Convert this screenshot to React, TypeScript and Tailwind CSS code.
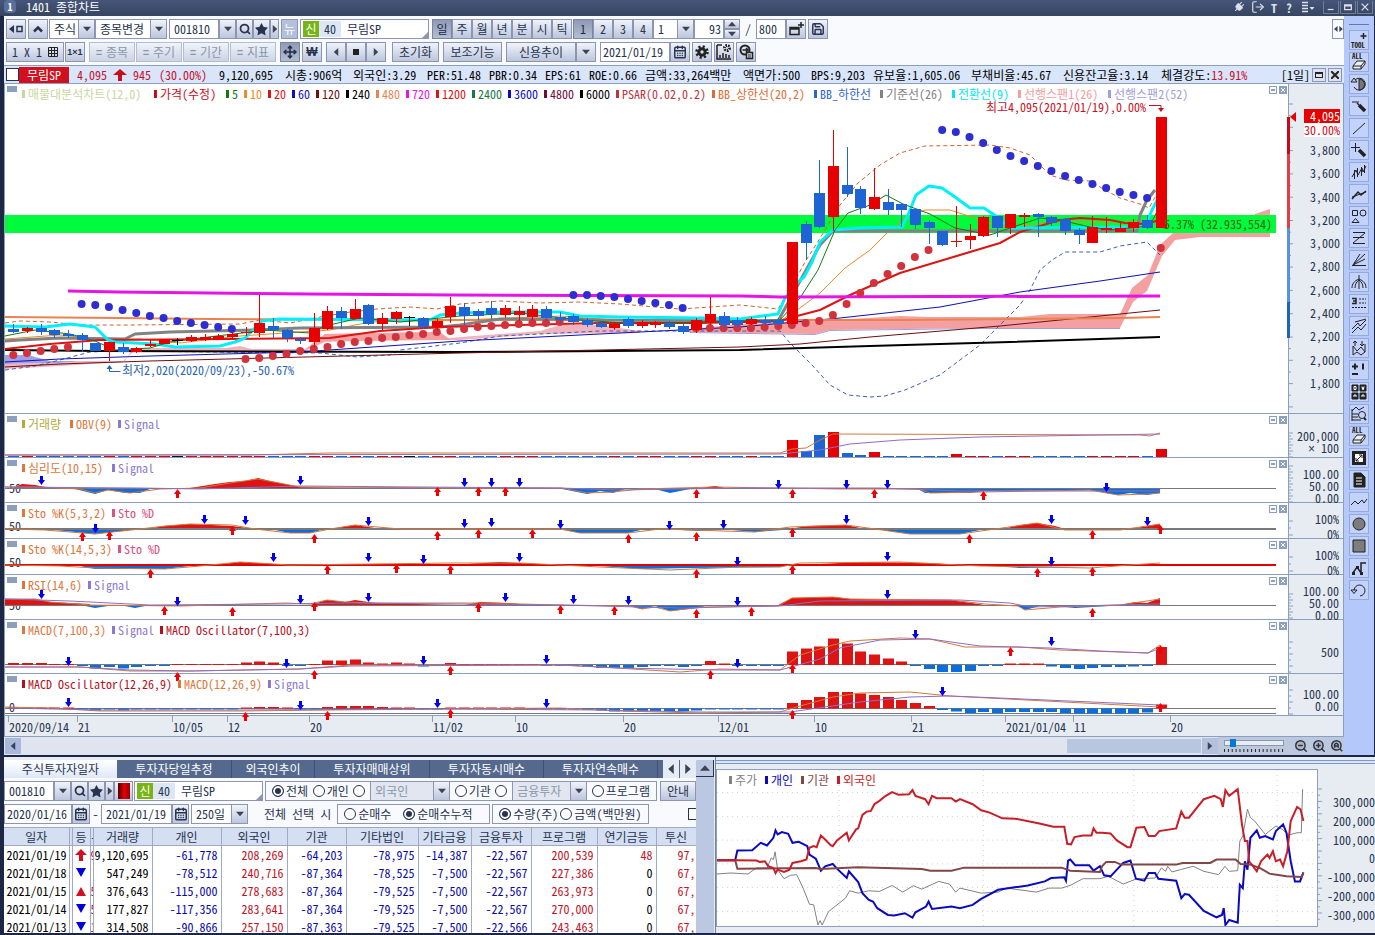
import { ReactNode } from "react"
import { CalendarDays, LogOut, Move, Plug, Save, Search, Star, ZoomIn, ZoomOut } from "lucide-react"

type LegendItem = [string, string]

const START = 13.3
const STEP = 13.66
const cx = (i: number) => START + STEP * i

// labels sit on a 6px grid: a hangul syllable takes two cells, everything else one
const cells = (text: string) => [...text].reduce((n, c) => n + (c >= "가" ? 12 : 6), 0)

const UP = "#e60000"
const DOWN = "#1e64d2"
const FLAT = "#111111"

// high, body top, body bottom, low, colour
const candles: [number, number, number, number, string][] = [
  [324, 329, 332, 333, DOWN], [327, 328, 331, 333, UP], [324, 328, 332, 335, DOWN], [329, 330, 335, 338, DOWN],
  [330, 334, 336, 338, DOWN], [333, 335, 340, 352, DOWN], [343, 343, 351, 351, DOWN], [342, 342, 351, 361, UP],
  [343, 347, 352, 354, DOWN], [347, 348, 352, 353, UP], [339, 344, 346, 347, UP], [339, 339, 344, 344, UP],
  [338, 340, 341, 345, FLAT], [335, 337, 341, 342, UP], [334, 337, 340, 341, UP], [334, 336, 340, 340, UP],
  [332, 334, 337, 339, UP], [327, 332, 333, 336, UP], [295, 323, 333, 337, UP], [318, 326, 330, 338, DOWN],
  [329, 330, 338, 342, DOWN], [337, 339, 341, 344, DOWN], [313, 328, 342, 347, UP], [306, 311, 329, 330, UP],
  [307, 311, 318, 329, DOWN], [299, 309, 319, 319, UP], [304, 305, 324, 325, DOWN], [313, 318, 324, 330, UP],
  [311, 312, 319, 324, UP], [316, 317, 318, 326, FLAT], [317, 318, 327, 329, DOWN], [319, 321, 327, 330, UP],
  [297, 306, 317, 323, UP], [303, 307, 316, 325, DOWN], [309, 311, 316, 320, DOWN], [301, 308, 314, 319, DOWN],
  [305, 308, 315, 318, UP], [306, 311, 315, 321, UP], [305, 309, 317, 320, UP], [306, 309, 318, 321, DOWN],
  [312, 317, 320, 324, DOWN], [314, 316, 322, 325, DOWN], [318, 320, 325, 327, DOWN], [321, 323, 327, 328, DOWN],
  [322, 324, 328, 330, UP], [317, 319, 326, 328, DOWN], [320, 322, 326, 328, UP], [321, 322, 325, 328, UP],
  [321, 323, 327, 329, DOWN], [324, 326, 332, 334, DOWN], [318, 320, 330, 333, UP], [297, 314, 322, 325, UP],
  [312, 316, 325, 329, DOWN], [317, 320, 325, 328, DOWN], [317, 319, 324, 325, UP], [316, 320, 323, 326, DOWN],
  [318, 320, 324, 326, DOWN], [242, 242, 324, 324, UP], [221, 224, 243, 260, DOWN], [160, 193, 227, 228, DOWN],
  [130, 166, 217, 231, UP], [147, 185, 194, 197, DOWN], [186, 189, 208, 214, DOWN], [168, 197, 209, 210, UP],
  [189, 202, 210, 215, DOWN], [203, 204, 210, 227, DOWN], [208, 209, 225, 229, DOWN], [220, 222, 228, 244, DOWN],
  [231, 231, 245, 246, DOWN], [206, 241, 242, 247, UP], [224, 236, 240, 249, UP], [216, 217, 236, 237, UP],
  [216, 216, 228, 237, DOWN], [214, 214, 228, 234, UP], [213, 215, 217, 227, UP], [213, 214, 217, 237, DOWN],
  [216, 217, 223, 226, DOWN], [218, 219, 231, 235, DOWN], [228, 230, 235, 244, DOWN], [216, 227, 243, 243, UP],
  [217, 228, 230, 233, UP], [223, 228, 232, 232, UP], [219, 222, 228, 232, UP], [215, 220, 228, 229, DOWN],
  [117, 117, 228, 228, UP],
]

// first index, colour, y of each dot
const sar: [number, string, number[]][] = [
  [0, "#d2323c", [355, 353, 351, 349, 347]],
  [5, "#2d2dd2", [304, 305, 307, 310, 313, 316, 318, 321, 323, 325, 327, 329]],
  [17, "#d2323c", [359, 358, 356, 354, 351, 349, 347, 344, 342, 341, 338, 337, 335, 334, 332, 331, 329, 327, 326, 325, 324, 323, 323, 322]],
  [41, "#2d2dd2", [295, 295, 296, 297, 299, 301, 303, 305, 308]],
  [50, "#d2323c", [328, 328, 328, 328, 328, 327, 326, 325, 323, 321, 315, 304, 293, 283, 274, 266, 257, 250]],
  [68, "#2d2dd2", [130, 132, 137, 143, 150, 156, 161, 166, 171, 176, 180, 184, 188, 192, 195, 198]],
  [84, "#d2323c", [248]],
]

const bigVolume: Record<number, number> = { 57: 17, 58: 6, 59: 22, 60: 25, 61: 4, 62: 2, 63: 5, 69: 3, 84: 8 }

const macd = [
  2, 2, 2, 1, 0.5, -1, -3.5, -2, -3.5, -2, -1, -0.5, 1, 1, 1, 1, 1, 2.5, 3.5, 2.5, -1, -1, 1, 4.5, 4.5, 5.5, 2.5, 1.5,
  2.5, 1.5, -1.5, -1, 2, 1, 1, 1, 1, 1, 1, -0.5, -0.5, -1, -1.5, -3, -3, -3, -2, -1, -1, -2, -1, 4, 1.5, -1, -0.5, -0.5,
  -0.5, 13.5, 16.5, 18.5, 26.5, 21.5, 13.5, 10.5, 6.5, 3.5, -1, -4, -7, -7, -6, -1, -1, 1.5, 1.5, 1.5, -1.5, -3, -4, -3,
  -2, -2, -1.5, -1, 18,
]

const osc = [
  0.5, 0.5, 0.5, 0.5, 0.5, -1, -2, -1, -2, -1, -1, -1, -1, -1, -1, -1, -1, 0.5, 1.5, 1.5, 0.5, -0.5, -0.5, 1.5, 2.5, 2.5,
  2.5, 1.5, 1, 1, -1, -1, 0.5, 0.5, 0.5, 0.5, 0.5, 0.5, -0.5, -0.5, -1, -1, -1.5, -2, -3, -3, -3, -2.5, -2.5, -2.5, -2, -0.5,
  -0.5, -1, -1, -1, -1, 5.5, 8.5, 11.5, 16.5, 16.5, 15, 13.5, 11.5, 8.5, 5.5, 2.5, -1.5, -3, -4.5, -3.5, -4.5, -3.5, -3.5,
  -3.5, -3.5, -4.5, -5, -5, -5, -5, -5, -4, 4,
]

const priceLegend: LegendItem[] = [
  ["매물대분석차트(12,0)", "#c8d7a0"], ["가격(수정)", "#c80f1e"], ["5", "#147814"], ["10", "#eb8c28"], ["20", "#dc1414"],
  ["60", "#0f0fb4"], ["120", "#6e0f0f"], ["240", "#000000"], ["480", "#eb8250"], ["720", "#e614e6"], ["1200", "#dc1414"],
  ["2400", "#197846"], ["3600", "#0a0ac8"], ["4800", "#6e0a3c"], ["6000", "#000000"], ["PSAR(0.02,0.2)", "#be323c"],
  ["BB_상한선(20,2)", "#dc6e32"], ["BB_하한선", "#3264c8"], ["기준선(26)", "#828282"], ["전환선(9)", "#00e6f0"],
  ["선행스팬1(26)", "#f0a0a0"], ["선행스팬2(52)", "#a0a0dc"],
]

const dates: [string, number][] = [
  ["2020/09/14", 69], ["21", 95], ["10/05", 55], ["12", 82], ["20", 123], ["11/02", 83], ["10", 108], ["20", 95],
  ["12/01", 96], ["10", 97], ["21", 94], ["2021/01/04", 68], ["11", 97], ["20", 173],
]

const columns: [string, string][] = [
  ["일자", "w-[65px]"], ["·", "w-[3px]"], ["등", "w-[18px]"], ["-", "w-[3px]"], ["거래량", "w-[59px]"], ["개인", "w-[69px]"],
  ["외국인", "w-[66px]"], ["기관", "w-[59px]"], ["기타법인", "w-[72px]"], ["기타금융", "w-[53px]"], ["금융투자", "w-[60px]"],
  ["프로그램", "w-[66px]"], ["연기금등", "w-[59px]"], ["투신", "w-[40px]"],
]

const rows = [
  ["2021/01/19", "", "limit", "9", "9,120,695", "-61,778", "208,269", "-64,203", "-78,975", "-14,387", "-22,567", "200,539", "48", "97,"],
  ["2021/01/18", "", "down", "", "547,249", "-78,512", "240,716", "-87,364", "-78,525", "-7,500", "-22,567", "227,386", "0", "67,"],
  ["2021/01/15", "", "up", "5", "376,643", "-115,000", "278,683", "-87,364", "-79,525", "-7,500", "-22,567", "263,973", "0", "67,"],
  ["2021/01/14", "", "down", "5", "177,827", "-117,356", "283,641", "-87,364", "-79,525", "-7,500", "-22,567", "270,000", "0", "67,"],
  ["2021/01/13", "", "down", "1", "314,508", "-90,866", "257,150", "-87,363", "-79,525", "-7,500", "-22,566", "243,463", "0", "67,"],
]

const btn =
  "flex h-5 shrink-0 items-center justify-center border border-[#8c96b4] bg-linear-to-b from-[#f0f3fa] to-[#bcc6dc] text-[#28344f]"
const btnOn =
  "flex h-5 shrink-0 items-center justify-center border border-[#7885a5] bg-linear-to-b from-[#8f9bb5] to-[#b4bed2] text-[#1e2a46]"
const btnDim =
  "flex h-5 shrink-0 items-center justify-center border border-[#b4bed2] bg-linear-to-b from-[#f0f3fa] to-[#ccd4e4] text-[#8c96aa]"
const field = "h-5 border border-[#8c96b4] bg-white pb-0.5 text-[#28344f] outline-none"

export default function App() {
  return (
    <div className="flex h-screen w-full flex-col overflow-hidden bg-[#1c2746] font-['Noto_Sans_Mono_CJK_KR','Noto_Sans_CJK_KR',sans-serif] text-xs leading-4 whitespace-nowrap text-[#28344f]">
      <TitleBar />
      <div className="flex shrink-0 border-r border-b-2 border-l-4 border-[#1c2746]">
        <div className="flex min-w-0 flex-1 flex-col">
          <Toolbar />
          <InfoBar />
          <Charts />
          <DateAxis />
          <ScrollRow />
        </div>
        <SideTools />
      </div>
      <div className="flex min-h-0 flex-1 border-b-2 border-l-4 border-[#1c2746] bg-[#e7ecf2]">
        <InvestorPanel />
        <InvestorChart />
      </div>
    </div>
  )
}

function TitleBar() {
  return (
    <header className="flex h-4 shrink-0 items-start bg-linear-to-b from-[#46557a] to-[#36455f] pr-0.5 pl-1 leading-[13px] text-white">
      <span className="mr-2.5 flex h-[13px] w-3 items-center justify-center rounded-sm bg-[#5a6e9b] text-[10px] font-bold">1</span>
      <h1>1401 종합차트</h1>
      <div className="ml-auto flex items-center gap-1.5 text-[#dce1eb]">
        <Plug className="size-3 rotate-45 fill-current" />
        <LogOut className="size-3.5" />
        <span className="font-bold">T</span>
        <span className="w-3 text-center font-bold">?</span>
        <svg className="h-3 w-3.5" viewBox="0 0 14 12" fill="none" stroke="currentColor">
          <path d="M1 1.5h6M1 4.5h6M1 7.5h6M1 10.5h6" strokeWidth="1.5" />
          <path d="M8.5 6h5L11 9z" fill="currentColor" stroke="none" />
        </svg>
        <div className="flex gap-px pl-0.5">
          {["M3 9h7", "M3 3.5h8v5.5H3zM3 4.5h8", "M3 2l8 8M11 2l-8 8"].map((d, i) => (
            <button key={d} aria-label={["최소화", "최대화", "닫기"][i]} className="flex h-[13px] w-4 items-center justify-center border border-t-0 border-[#6e7d9b]">
              <svg className="h-2.5 w-3" viewBox="0 0 14 12" fill="none" stroke="currentColor" strokeWidth="1.5">
                <path d={d} />
              </svg>
            </button>
          ))}
        </div>
      </div>
    </header>
  )
}

function Tri({ d = "M0 2h9L4.500 7z", className = "h-2 w-2.5" }: { d?: string; className?: string }) {
  return (
    <svg className={className} viewBox="0 0 9 9" fill="#3c4355">
      <path d={d} />
    </svg>
  )
}

const LEFT = "M7 0v9L2 4.500z"
const RIGHT = "M2 0v9l5-4.500z"

function Gear() {
  return (
    <svg className="size-4" viewBox="0 0 16 16" fill="none" stroke="#222">
      <circle cx="8" cy="8" r="5.500" strokeWidth="2.500" strokeDasharray="2.160 2.160" />
      <circle cx="8" cy="8" r="3.200" strokeWidth="3" />
    </svg>
  )
}

function Pick({ label, value, className, dim }: { label: string; value: string; className: string; dim?: boolean }) {
  return (
    <div className={`relative shrink-0 ${className}`}>
      <select
        aria-label={label}
        disabled={dim}
        className={`block h-5 w-full appearance-none border border-[#8c96b4] pl-1 outline-none ${dim ? "bg-[#e1e6f0] text-[#8c96aa] opacity-100" : "bg-white text-[#28344f]"}`}
      >
        <option>{value}</option>
      </select>
      <span className="pointer-events-none absolute inset-y-0 right-0 flex w-[17px] items-center justify-center border border-[#8c96b4] bg-linear-to-b from-[#f0f3fa] to-[#bcc6dc]">
        <Tri />
      </span>
    </div>
  )
}

function CodeField() {
  return (
    <>
      <input aria-label="종목코드" defaultValue="001810" className={`${field} w-[50px] pl-1`} />
      <button aria-label="목록" className={`${btn} w-[17px]`}><Tri /></button>
      <button aria-label="검색" className={`${btn} w-[17px]`}><Search className="size-3" strokeWidth={3.5} /></button>
      <button aria-label="관심" className={`${btn} w-[17px]`}><Star className="size-[15px] shrink-0 fill-[#28344f]" strokeWidth={0} /></button>
      <button aria-label="다음" className={`${btn} w-[9px]`}><Tri d={RIGHT} className="size-2 shrink-0" /></button>
    </>
  )
}

function StockName() {
  return (
    <div className="relative flex h-5 w-[129px] shrink-0 items-center border border-[#8c96b4] bg-white pl-0.5">
      <span className="flex h-4 w-4 items-center justify-center bg-[#78b414] text-white">신</span>
      <span className="flex h-4 w-[22px] items-center justify-center bg-[#dce6f5]">40</span>
      <span className="pl-1.5">무림SP</span>
      <span className="absolute right-0 bottom-0 border-[3px] border-transparent border-r-[#8c96b4] border-b-[#8c96b4]" />
    </div>
  )
}

function Toolbar() {
  return (
    <div className="flex justify-between bg-[#f8fafe]">
      <div className="flex flex-col gap-[3px] py-[3px] pl-0.5">
        <div className="flex items-center">
          <button aria-label="이전" className={`${btn} mr-0.5 w-5`}>
            <svg className="h-2.5 w-3.5" viewBox="0 0 14 10" fill="#28344f"><path d="M0 5l5-4v8z" /><path d="M8 2.500h5v5H8z" fill="none" stroke="#28344f" strokeWidth="1.500" /></svg>
          </button>
          <button aria-label="접기" className={`${btn} mr-px w-5`}>
            <svg className="size-3" viewBox="0 0 12 12" fill="none" stroke="#28344f" strokeWidth="2.500"><path d="M2 8.500L6 4.500l4 4" /></svg>
          </button>
          <Pick label="구분" value="주식" className="w-[46px]" />
          <Pick label="종목변경" value="종목변경" className="mr-0.5 w-[72px]" />
          <CodeField />
          <button className="mr-0.5 ml-0.5 flex h-5 w-[17px] items-center justify-center border border-[#8c96b4] bg-[#b4bfdc] text-white">뉴</button>
          <StockName />
          <div className="ml-[3px] flex">
            {["일", "주", "월", "년", "분", "시", "틱"].map((t, i) => (
              <button key={t} className={`${i === 0 ? btnOn : btn} w-5`}>{t}</button>
            ))}
          </div>
          <div className="ml-px flex">
            {["1", "2", "3", "4"].map((t, i) => (
              <button key={t} className={`${i === 0 ? btnOn : btn} w-5`}>{t}</button>
            ))}
          </div>
          <Pick label="분 단위" value="1" className="w-[41px]" />
          <input aria-label="표시 봉수" defaultValue="93" className={`${field} w-[30px] pr-0.5 text-right`} />
          <div className="flex flex-col">
            <button aria-label="증가" className={`${btn} h-2.5! w-4`}><Tri d="M0 7h9L4.500 2z" className="size-2" /></button>
            <button aria-label="감소" className={`${btn} h-2.5! w-4`}><Tri className="size-2" /></button>
          </div>
          <span className="w-4 text-center">/</span>
          <input aria-label="전체 봉수" defaultValue="800" className={`${field} w-[30px] pl-0.5`} />
          <button aria-label="새 창" className={`${btn} mr-0.5 w-5`}>
            <svg className="size-4" viewBox="0 0 16 16" fill="none" stroke="#222" strokeWidth="1.500"><path d="M2 6.500h9v7H2zM2 8h9M13 1v6M10 4h6" /></svg>
          </button>
          <button aria-label="저장" className={`${btn} w-5`}><Save className="size-3.5" strokeWidth={2.5} /></button>
        </div>
        <div className="flex items-center">
          <button className={`${btn} mr-px w-[58px] gap-1.5`}>
            <span>1 X 1</span>
            <svg className="size-2.5" viewBox="0 0 10 10" fill="none" stroke="#222"><path d="M.5.5h9v9h-9zM3.500 0v10M6.500 0v10M0 3.500h10M0 6.500h10" /></svg>
          </button>
          <button className={`${btn} mr-1 w-5 font-['Liberation_Sans',sans-serif] text-[9px] font-bold`}>1×1</button>
          <div className="flex gap-px">
            {["종목", "주기", "기간", "지표"].map((t) => (
              <button key={t} className={`${btnDim} w-[46px] gap-1`}><b>=</b>{t}</button>
            ))}
          </div>
          <button aria-label="이동" className={`${btnOn} mr-0.5 ml-1 w-5`}><Move className="size-3.5" strokeWidth={2.5} /></button>
          <button aria-label="원화" className={`${btn} mr-1 w-5 font-['Liberation_Sans','Noto_Sans_CJK_KR',sans-serif] font-bold`}>₩</button>
          <div className="mr-1.5 flex">
            <button aria-label="뒤로" className={`${btn} w-5`}><Tri d={LEFT} className="size-2" /></button>
            <button aria-label="정지" className={`${btn} w-5`}><span className="size-1.5 bg-[#222]" /></button>
            <button aria-label="앞으로" className={`${btn} w-5`}><Tri d={RIGHT} className="size-2" /></button>
          </div>
          <button className={`${btn} mr-1 w-[47px]`}>초기화</button>
          <button className={`${btn} mr-1 w-[59px]`}>보조기능</button>
          <button className={`${btn} w-[70px]`}>신용추이</button>
          <button aria-label="신용추이 목록" className={`${btn} mr-1 w-5`}><Tri /></button>
          <input aria-label="기준일" defaultValue="2021/01/19" className={`${field} w-[70px] pl-0.5`} />
          <button aria-label="달력" className={`${btn} mr-0.5 w-5`}><CalendarDays className="size-3.5" strokeWidth={2.5} /></button>
          <button aria-label="설정" className={`${btn} mr-0.5 w-5`}><Gear /></button>
          <button aria-label="차트 설정" className={`${btn} mr-0.5 w-5`}>
            <svg className="size-4" viewBox="0 0 16 16" fill="none" stroke="#222" strokeWidth="1.500"><path d="M1 1v14h14M4 14v-3M7 14V9M10 14v-4M13 14v-3M1 1h5" /><circle cx="11" cy="4" r="2.500" strokeDasharray="1.500 1" strokeWidth="3" /></svg>
          </button>
          <button aria-label="전환" className={`${btn} w-5`}>
            <svg className="size-4" viewBox="0 0 16 16" fill="none" stroke="#222" strokeWidth="1.500"><circle cx="7" cy="6" r="4.500" strokeWidth="2" /><path d="M4.500 6h5M8 4l2 2-2 2" /><path d="M8.500 8.500h6v6h-6z" fill="#dde3ee" /><path d="M10 11h3M10 13h3" strokeWidth="1" /></svg>
          </button>
        </div>
      </div>
      <button aria-label="펼치기" className="mt-[3px] flex h-5 w-3 items-center justify-center border border-[#8c96b4]">
        <Tri d="M4 1v7L0 4.500zM6 1v7l4-3.500z" className="h-2 w-2.5" />
      </button>
    </div>
  )
}

function InfoBar() {
  const facts = [
    "시총:906억", "외국인:3.29", "PER:51.48", "PBR:0.34", "EPS:61", "ROE:0.66", "금액:33,264백만", "액면가:500",
    "BPS:9,203", "유보율:1,605.06", "부채비율:45.67", "신용잔고율:3.14",
  ]
  return (
    <div className="flex h-[19px] items-center border-t border-b border-[#8ca0be] bg-[#d9e5fb] pl-0.5 text-black">
      <input type="checkbox" aria-label="선택" className="size-[13px] shrink-0 appearance-none border border-[#28344f] bg-white" />
      <span className="flex h-4 w-[50px] shrink-0 items-center justify-center bg-[#d20f1e] text-white">무림SP</span>
      <div className="flex items-center pl-2 text-[#c80f1e]">
        <span>4,095</span>
        <svg className="mx-1.5 h-3 w-3.5" viewBox="0 0 14 12" fill="#c80f1e"><path d="M7 0l7 6H9v6H5V6H0z" /></svg>
        <span>945</span>
        <span className="ml-2">(30.00%)</span>
      </div>
      <span className="ml-3">9,120,695</span>
      <div className="ml-3 flex gap-2">
        {facts.map((f) => (
          <span key={f} style={{ width: cells(f) }}>{f}</span>
        ))}
        <span>체결강도:<span className="text-[#c80f1e]">13.91%</span></span>
      </div>
      <span className="ml-auto">[1일]</span>
      <button aria-label="창 크기" className="ml-0.5 flex h-3.5 w-3.5 shrink-0 items-center justify-center border border-[#8c96b4] bg-[#dce2ee]"><span className="h-1.5 w-2 border border-t-2 border-[#222]" /></button>
      <button aria-label="차트 닫기" className="mr-0.5 ml-0.5 flex h-3.5 w-3.5 shrink-0 items-center justify-center border border-[#8c96b4] bg-[#dce2ee]">
        <svg className="size-2" viewBox="0 0 8 8" stroke="#222" strokeWidth="2"><path d="M0 0l8 8M8 0L0 8" /></svg>
      </button>
    </div>
  )
}

function Legend({ items, className = "" }: { items: LegendItem[]; className?: string }) {
  return (
    <div className={`absolute flex ${className}`}>
      {items.map(([text, color]) => (
        <span key={text} className="flex items-center" style={{ color, width: cells(text) + 12 }}>
          <span className="mr-[3px] ml-1.5 h-2 w-[3px] shrink-0 bg-current" />
          {text}
        </span>
      ))}
    </div>
  )
}

type PanelProps = { top: number; height: number; legend: LegendItem[]; base?: [string, string]; axis: ReactNode; children: ReactNode }

function Panel({ top, height, legend, base, axis, children }: PanelProps) {
  return (
    <section className="flex border-b border-[#8ca0be]">
      <div className="relative min-w-0 flex-1">
        {base && <span className={`absolute left-1 leading-3 ${base[1]}`}>{base[0]}</span>}
        <svg className="relative block w-full overflow-visible" style={{ height }} viewBox={`5 ${top} 1283 ${height}`} preserveAspectRatio="none">
          {children}
        </svg>
        <span className="absolute top-0.5 left-0.5 h-1.5 w-2.5 bg-[#8ca0be]" />
        <Legend items={legend} className="top-0.5 left-[11px]" />
        <div className="absolute top-0.5 right-px flex gap-0.5">
          <button aria-label="지표 확대" className="flex size-2 items-center justify-center border border-[#8ca0be] bg-white"><span className="h-0.5 w-1 bg-[#8ca0be]" /></button>
          <button aria-label="지표 닫기" className="flex size-2 items-center justify-center bg-[#8ca0be]">
            <svg className="size-1.5" viewBox="0 0 6 6" stroke="white"><path d="M1 1l4 4M5 1L1 5" /></svg>
          </button>
        </div>
      </div>
      <div className="w-14 shrink-0 border-x border-[#8ca0be] bg-[#e7ecf2]" style={{ height }}>
        <div className="relative z-10" style={{ height }}>{axis}</div>
      </div>
    </section>
  )
}

function Ticks({ height, from, step }: { height: number; from: number; step: number }) {
  const n = Math.max(0, Math.floor((height - from) / step) + 1)
  return (
    <svg className="absolute top-0 left-0 w-2" style={{ height }} viewBox={`0 0 8 ${height}`} stroke="#8ca0be">
      {Array.from({ length: n }, (_, i) => (
        <path key={i} d={`M0 ${from + i * step}h${i % 2 ? 2 : 4}`} />
      ))}
    </svg>
  )
}

function Labels({ items, className }: { items: string[]; className: string }) {
  return (
    <div className={`pr-1 text-right ${className}`}>
      {items.map((t) => (
        <div key={t}>{t}</div>
      ))}
    </div>
  )
}

function Bars({ data, base, up, down }: { data: number[]; base: number; up: string; down: string }) {
  return (
    <g>
      {data.map((v, i) => (
        <rect key={i} x={Math.round(cx(i)) - 5} width={11} y={v > 0 ? base - Math.max(v, 1) : base} height={Math.max(Math.abs(v), 1)} fill={v > 0 ? up : down} />
      ))}
    </g>
  )
}

function Arrows({ down, up }: { down: [number, number][]; up: [number, number][] }) {
  return (
    <g>
      {down.map(([x, y]) => (
        <path key={`d${x}`} fill="#0000f0" d={`M${x - 1} ${y - 4}h3v4h2l-3.500 5l-3.500-5h2z`} />
      ))}
      {up.map(([x, y]) => (
        <path key={`u${x}`} fill="#f00000" d={`M${x - 1} ${y + 4}h3v-4h2l-3.500-5l-3.500 5h2z`} />
      ))}
    </g>
  )
}

function Line({ points, color, width = 1, dash }: { points: string; color: string; width?: number; dash?: string }) {
  return <polyline points={points} fill="none" stroke={color} strokeWidth={width} strokeDasharray={dash} strokeLinejoin="round" />
}

function PriceChart() {
  return (
    <>
      <path fill="#a0a0e6" d="M5 355L28 355L50 361L85 361L60 363L5 364z" />
      <path fill="#f0b4be" d="M5 364L60 363L85 361L125 361L133 348L225 348L240 346L252 349L305 349L325 334L380 333L440 332L448 338L540 331L560 325L600 325L640 331L640 333L540 334L460 340L400 340L325 342L305 351L133 352L122 362L60 366L5 369z" />
      <path fill="#f5a0a0" d="M305 350L325 334L440 332L450 340L325 341zM680 330L740 324L800 322L900 316L930 317L1020 317L1050 314L1120 314L1132 288L1148 275L1160 245L1175 231L1240 228L1255 214L1270 209L1270 237L1200 237L1175 240L1162 256L1147 291L1133 302L1120 328L980 328L830 330L815 334L680 332z" />
      <path fill="#a0a0dc" d="M690 332L815 334L830 330L980 328L1120 328V329H980L830 331L815 335L690 333z" />
      <rect x={5} y={215} width={1271} height={18} fill="#00fa3c" />
      <Line color="#c86432" dash="4 3" points="5,323 20,321 50,322 80,325 130,325 240,324 260,320 290,323 320,317 350,312 377,309 410,307 437,309 460,304 500,301 540,303 580,302 620,304 680,309 740,305 778,309 790,290 805,262 822,235 840,205 858,183 880,165 900,153 925,146 990,145 1010,148 1030,155 1050,175 1065,180 1090,181 1105,190 1120,198 1140,204 1149,208 1158,192" />
      <Line color="#3c5fb4" dash="4 3" points="5,370 35,366 60,360 90,352 115,351 320,353 357,357 390,355 400,350 460,343 500,336 600,331 700,331 780,331 790,343 812,365 830,385 848,395 870,397 885,396 905,390 940,375 980,345 1000,325 1020,305 1030,290 1040,270 1052,260 1065,252 1100,252 1120,246 1147,242 1160,255" />
      <Line color="#000" width={2} points="5,350 100,351 460,352 740,350 870,346 1010,342 1160,337" />
      <Line color="#6e0f0f" points="5,367 60,364 150,361 460,353 740,347 800,344 870,337 1000,326 1130,313 1160,310" />
      <Line color="#0f0fb4" points="5,362 60,359 150,356 300,352 460,341 740,327 840,318 940,307 1020,292 1100,281 1160,272" />
      <Line color="#eb8250" width={2} points="5,317 120,318 210,319 460,320 740,320 900,320 1120,318 1160,317" />
      <Line color="#eb8c28" points="5,339 60,335 100,339 140,339 180,343 240,336 300,332 330,330 370,322 460,320 560,316 640,322 780,321 800,308 820,293 845,268 870,250 887,233 905,218 925,210 950,210 975,218 1000,227 1060,222 1160,222" />
      <Line color="#828282" width={3} points="5,341 20,340 60,338 125,339 135,334 170,332 255,330 300,328 440,327 460,325 500,319 560,319 600,320 700,321 778,321 800,281 820,245 833,231 1137,231 1140,215 1147,200 1155,190" />
      <Line color="#dc1414" width={2} points="5,349 50,344 100,340 230,339 330,338 380,331 440,327 520,325 600,323 700,323 780,321 797,316 820,310 850,295 900,273 960,255 1000,243 1020,232 1040,226 1060,220 1080,218 1110,220 1125,223 1145,224 1160,220" />
      <Line color="#00f0fa" width={3} points="5,326 45,327 70,324 95,327 108,340 115,342 155,344 175,347 220,346 235,342 245,338 258,325 262,321 280,319 430,320 440,315 460,313 500,312 560,312 580,316 620,317 700,318 740,319 778,314 785,298 797,283 804,277 812,262 820,242 833,230 860,228 902,227 908,215 916,195 929,186 942,188 955,197 970,208 984,208 996,216 1010,228 1145,227 1152,210 1160,195" />
      <Line color="#147814" points="5,336 35,330 70,334 95,341 115,350 150,348 170,342 200,338 250,332 265,330 310,333 325,326 360,318 400,322 460,316 520,313 580,320 640,324 700,322 780,320 800,298 818,270 835,230 848,213 870,205 886,195 903,204 930,214 955,228 990,235 1010,228 1040,218 1060,220 1090,227 1110,230 1150,226 1160,205" />
      <Line color="#e614e6" width={3} points="68,291 118,292 308,294 455,295 740,296 780,297 1160,296" />
      {sar.map(([start, color, ys]) =>
        ys.map((y, i) => <circle key={`${start}-${i}`} cx={cx(start + i)} cy={y} r={4} fill={color} />)
      )}
      {candles.map(([high, top, bottom, low, color], i) => (
        <g key={i} fill={color}>
          <rect x={Math.round(cx(i))} y={high} width={1} height={low - high} />
          <rect x={Math.round(cx(i)) - 5} y={top} width={11} height={Math.max(bottom - top, 1)} />
        </g>
      ))}
      <path d="M1149 105.500h12v4" stroke="#c80f1e" fill="none" />
      <path d="M1158 108h6l-3 4z" fill="#c80f1e" />
      <path d="M109.500 368v3.500h11" stroke="#2864b4" fill="none" />
      <path d="M106.500 369h6l-3-4z" fill="#2864b4" />
    </>
  )
}

function Charts() {
  const red = "#dc1414"
  const blue = "#0a6edc"
  const grey = "#787878"
  const orange = "#d2783c"
  const violet = "#8c6ec8"
  const scale = ["3,800", "3,600", "3,400", "3,200", "3,000", "2,800", "2,600", "2,400", "2,200", "2,000", "1,800"]
  return (
    <div className="border-l border-[#8ca0be] bg-white">
      <Panel
        top={84}
        height={329}
        legend={priceLegend}
        axis={
          <>
            <Ticks height={329} from={20} step={11.65} />
            <svg className="absolute top-0 -left-0.5 h-[329px] w-2.5" viewBox="0 84 10 329">
              <path d="M0 117h3v52H0z" fill="#c80a14" />
              <path d="M0 154h3v74H0z" fill="#e63c46" />
              <path d="M0 228h3v74H0z" fill="#5a91dc" />
              <path d="M0 302h3v36H0z" fill="#1e64be" />
              <path d="M3 117l6-5v10z" fill="#e60000" />
            </svg>
            <div className="flex flex-col items-end pt-[25px] pr-[3px]">
              <span className="flex h-3.5 items-center bg-[#e60000] pl-1.5 text-white">4,095</span>
              <span className="mb-[5px] flex h-3.5 items-center bg-white text-[#c80f1e]">30.00%</span>
              <div className="flex h-[249px] flex-col items-end justify-between">
                {scale.map((s) => (
                  <span key={s}>{s}</span>
                ))}
              </div>
            </div>
          </>
        }
      >
        <PriceChart />
      </Panel>
      <div className="relative">
        <span className="absolute -top-[315px] right-[198px] text-[#c80f1e]">최고4,095(2021/01/19),0.00%</span>
        <span className="absolute -top-[198px] right-[72px] text-[#3c6414]">5.37% (32.935,554)</span>
        <span className="absolute -top-[52px] left-[117px] text-[#2864b4]">최저2,020(2020/09/23),-50.67%</span>
      </div>
      <Panel
        top={414}
        height={43}
        legend={[["거래량", "#b4aa3c"], ["OBV(9)", "#dc783c"], ["Signal", "#8c78d2"]]}
        axis={
          <>
            <Ticks height={43} from={19} step={3} />
            <div className="pt-4 pr-1 text-right leading-3">
              <div>200,000</div>
              <div><span className="font-['Liberation_Sans',sans-serif]">×</span> 100</div>
            </div>
          </>
        }
      >
        <g>
          {candles.map((c, i) => {
            const h = bigVolume[i] ?? 1
            return <rect key={i} x={Math.round(cx(i)) - 5} width={11} y={457 - h} height={h} fill={c[4]} />
          })}
        </g>
        <Line color={orange} points="5,455 250,455 330,453 780,453 792,449 806,448 820,440 833,434 1140,435 1150,436 1160,433" />
        <Line color={violet} points="5,455 780,454 820,450 850,444 900,440 980,437 1160,434" />
      </Panel>
      <Panel
        top={458}
        height={44}
        base={["50", "bottom-2"]}
        legend={[["심리도(10,15)", "#dc783c"], ["Signal", "#8c78d2"]]}
        axis={<><Ticks height={44} from={8} step={3} /><Labels items={["100.00", "50.00", "0.00"]} className="pt-2.5 leading-3" /></>}
      >
        <path d="M5 488.500H1276" stroke={grey} />
        <path fill={red} d="M13 488L22 484L35 485L50 488zM190 488L215 484L230 482L245 481L258 478L270 481L290 485L300 487L360 488zM700 488L715 486L725 488z" />
        <path fill={blue} d="M75 489L95 494L108 490L125 493L140 493L150 489zM562 489L587 494L600 491L613 493L625 489zM655 489L670 493L690 489zM918 489L925 493L970 493L983 491L1090 490L1105 493L1118 495L1130 493L1147 495L1160 493V489z" />
        <Line color={orange} points="5,487 40,487 80,489 95,493 108,490 130,493 160,489 200,488 230,483 258,479 300,487 480,488 562,488 587,493 613,492 640,489 715,487 840,489 918,489 930,493 1090,490 1118,495 1147,494 1160,493" />
        <Line color={violet} points="5,487 140,488 200,489 300,486 420,487 560,488 620,490 740,488 880,488 960,491 1160,491" />
        <Arrows
          down={[[41, 480], [300, 480], [464, 482], [491, 482], [519, 482], [778, 484], [846, 484], [887, 484], [1106, 487]]}
          up={[[177, 494], [437, 492], [478, 492], [505, 492], [696, 494], [792, 494], [874, 494], [983, 496]]}
        />
      </Panel>
      <Panel
        top={503}
        height={35}
        base={["50", "bottom-1.5"]}
        legend={[["Sto %K(5,3,2)", "#dc783c"], ["Sto %D", "#dc5082"]]}
        axis={<><Ticks height={35} from={18} step={7} /><Labels items={["100%", "0%"]} className="pt-2 leading-[15px]" /></>}
      >
        <path fill={red} d="M145 529L165 526L190 524L232 526L255 529zM330 529L355 525L375 528zM790 529L806 526L846 525L865 529zM1002 529L1020 525L1037 523L1055 526L1065 529zM1130 529L1160 524V529z" />
        <path fill={blue} d="M45 529L95 534L140 529zM270 529L290 533L310 533L325 529zM560 529L580 533L628 533L645 529zM660 529L700 531L720 529zM720 529L755 532L782 530zM875 529L910 534L960 534L985 529z" />
        <path d="M5 529H1276" stroke={grey} strokeWidth={2} />
        <Line color={orange} points="5,529 45,530 95,534 140,529 165,526 190,524 232,525 255,529 290,533 310,533 330,529 355,525 400,529 540,529 560,529 580,533 628,533 660,529 755,532 790,527 846,525 875,529 910,534 960,534 1002,528 1037,523 1065,530 1120,530 1160,524" />
        <Arrows
          down={[[95, 528], [204, 519], [245, 520], [368, 521], [464, 523], [491, 522], [560, 524], [669, 525], [723, 524], [846, 519], [1051, 519], [1147, 521]]}
          up={[[82, 537], [109, 536], [232, 531], [314, 539], [437, 536], [478, 534], [532, 534], [628, 539], [696, 537], [792, 533], [969, 539], [1092, 535], [1160, 530]]}
        />
      </Panel>
      <Panel
        top={539}
        height={35}
        base={["50", "bottom-1.5"]}
        legend={[["Sto %K(14,5,3)", "#dc783c"], ["Sto %D", "#dc5082"]]}
        axis={<><Ticks height={35} from={18} step={7} /><Labels items={["100%", "0%"]} className="pt-2 leading-[15px]" /></>}
      >
        <path fill={red} d="M215 565L240 562L275 564L290 565zM450 565L500 562L560 565zM800 565L860 562L930 563L960 565z" />
        <path fill={blue} d="M80 566L95 569L165 569L190 566zM600 566L640 569L690 568L780 567L785 566zM990 566L1020 568L1090 567z" />
        <path d="M5 565H1276" stroke={UP} strokeWidth={2} />
        <Line color={orange} points="5,565 60,566 95,568 165,569 200,566 240,562 290,565 450,563 520,563 600,567 670,570 740,567 780,567 800,563 900,562 980,566 1090,568 1130,565 1160,563" />
        <Arrows
          down={[[273, 557], [368, 557], [423, 559], [519, 557], [737, 561], [887, 556], [1051, 561]]}
          up={[[150, 574], [327, 570], [396, 569], [450, 570], [696, 574], [792, 570], [1037, 573], [1092, 572]]}
        />
      </Panel>
      <Panel
        top={575}
        height={44}
        base={["50", "bottom-2"]}
        legend={[["RSI(14,6)", "#dc783c"], ["Signal", "#8c78d2"]]}
        axis={<><Ticks height={44} from={19} step={3} /><Labels items={["100.00", "50.00", "0.00"]} className="pt-2.5 leading-3" /></>}
      >
        <path d="M5 605.500H1276" stroke={grey} />
        <path fill={red} d="M5 605V599H35L50 602L90 604V605zM310 605L327 600L345 602L355 600L375 603L460 605zM465 605L480 602L510 603L530 605zM778 605L792 598L833 597L850 599L950 600L965 602L985 605zM1120 605L1135 602L1147 603L1160 598V605z" />
        <path fill={blue} d="M85 606L95 608L108 606zM125 606L135 608L145 606zM630 606L642 609L655 606L670 611L700 608L705 606zM1018 606L1025 610L1040 606zM1055 606L1075 608L1110 606z" />
        <Line color={orange} points="5,599 35,599 50,602 90,605 180,606 250,604 285,603 310,604 327,600 345,602 375,603 480,603 560,605 630,606 642,609 655,607 670,611 700,607 778,606 792,598 833,597 850,599 950,600 985,604 1018,606 1025,610 1060,607 1120,605 1160,599" />
        <Line color={violet} points="5,599 70,601 150,605 280,604 350,603 560,605 680,608 780,606 820,601 960,600 1010,603 1030,607 1160,604" />
        <Arrows
          down={[[41, 594], [177, 601], [300, 599], [368, 597], [505, 597], [573, 599], [628, 600], [737, 601], [887, 594]]}
          up={[[164, 611], [232, 612], [314, 607], [478, 608], [560, 610], [614, 611], [696, 614], [751, 612], [1092, 613]]}
        />
      </Panel>
      <Panel
        top={620}
        height={53}
        legend={[["MACD(7,100,3)", "#dc783c"], ["Signal", "#8c78d2"], ["MACD Oscillator(7,100,3)", "#b40f1e"]]}
        axis={<><Ticks height={53} from={22} step={6} /><Labels items={["500"]} className="pt-6" /></>}
      >
        <path d="M5 664.500H1276" stroke={grey} />
        <Bars data={macd} base={665} up={red} down={blue} />
        <Line color={orange} points="5,667 80,667 130,671 190,671 300,669 350,665 560,665 600,667 680,672 720,669 780,670 800,655 833,645 850,641 900,638 930,639 965,647 1020,647 1060,650 1148,653 1160,645" />
        <Line color={violet} points="5,667 80,667 130,670 190,671 300,669 350,666 560,665 620,668 720,670 780,670 820,659 840,648 880,640 930,639 980,646 1050,648 1100,651 1148,653 1160,648" />
        <Arrows
          down={[[68, 661], [286, 663], [423, 660], [546, 659], [737, 663], [915, 634], [1051, 641]]}
          up={[[177, 677], [314, 675], [450, 671], [710, 675], [792, 669], [1010, 652], [1160, 650]]}
        />
      </Panel>
      <Panel
        top={674}
        height={41}
        base={["0", "bottom-0.5"]}
        legend={[["MACD Oscillator(12,26,9)", "#b40f1e"], ["MACD(12,26,9)", "#dc783c"], ["Signal", "#8c78d2"]]}
        axis={<><Ticks height={41} from={16} step={6} /><Labels items={["100.00", "0.00"]} className="pt-3.5 leading-3" /></>}
      >
        <path d="M5 708.500H1276M5 713.500H1276" stroke={grey} />
        <Bars data={osc} base={708.5} up={red} down={blue} />
        <Line color={orange} points="5,707 50,708 100,711 240,711 330,710 560,708 620,711 700,713 780,712 800,706 833,697 860,693 910,692 950,696 1160,707" />
        <Line color={violet} points="5,708 100,710 240,710 440,709 600,710 700,712 790,712 860,702 910,697 950,696 1000,698 1160,705" />
        <Arrows
          down={[[68, 702], [300, 705], [437, 703], [546, 703], [942, 691]]}
          up={[[245, 717], [327, 716], [450, 714], [792, 715], [1160, 708]]}
        />
      </Panel>
    </div>
  )
}

function DateAxis() {
  return (
    <div className="flex h-[21px] border-x border-b border-[#8ca0be] bg-[#e7ecf2] pb-px pl-[3px]">
      {dates.map(([text, span], i) => (
        <span key={i} className="flex min-w-0 basis-0 items-end" style={{ flexGrow: span }}>
          <i className="mb-auto h-1.5 w-px bg-[#8ca0be]" />
          {text}
        </span>
      ))}
    </div>
  )
}

function ScrollRow() {
  return (
    <div className="flex h-[18px] items-center bg-[#dfe4ee] pl-px">
      <button aria-label="왼쪽" className="flex h-4 w-4 items-center justify-center bg-[#a9b9de]"><Tri d={LEFT} className="size-2" /></button>
      <div className="flex h-3.5 min-w-0 flex-1 justify-end pr-px"><span className="w-[134px] bg-[#b9c6df]" /></div>
      <button aria-label="오른쪽" className="flex h-4 w-4 items-center justify-center bg-[#b4c1de]"><Tri d={RIGHT} className="size-2" /></button>
      <div className="flex h-full w-[126px] items-center gap-1 bg-[#bcc8de] pl-1.5">
        <div className="mr-1.5 flex w-[62px] flex-col gap-0.5">
          <input
            type="range"
            aria-label="확대 비율"
            min={0}
            max={100}
            defaultValue={10}
            className="block h-1.5 w-full appearance-none border border-[#8c96b4] bg-[#e7ecf2] [&::-webkit-slider-thumb]:h-2 [&::-webkit-slider-thumb]:w-1.5 [&::-webkit-slider-thumb]:appearance-none [&::-webkit-slider-thumb]:bg-[#0a78d2]"
          />
          <svg className="h-1 w-full" viewBox="0 0 62 4" preserveAspectRatio="none"><path d="M0 2.500H62" stroke="#222" strokeWidth="3" strokeDasharray="1 3" /></svg>
        </div>
        <button aria-label="축소"><ZoomOut className="size-3.5 fill-[#b4b4b4]" strokeWidth={2.5} /></button>
        <button aria-label="확대"><ZoomIn className="size-3.5 fill-[#b4b4b4]" strokeWidth={2.5} /></button>
        <button aria-label="전체">
          <svg className="size-3.5" viewBox="0 0 24 24" fill="#b4b4b4" stroke="#28344f" strokeWidth="2.500"><circle cx="11" cy="11" r="8" /><path d="M21 21l-4.300-4.300M8 15V9.500Q11 5 14 9.500V15M8 12h6" /></svg>
        </button>
      </div>
    </div>
  )
}

const toolText = { fontSize: 7, fontWeight: "bold", fill: "#222", stroke: "none" }

const eraser = (
  <>
    <text x="1" y="5" {...toolText}>ALL</text>
    <path d="M2 12l4-5h8l-4 5zM2 12v3h8v-3M10 15l4-5V7" fill="#eee" />
  </>
)

const tools: [string, ReactNode][] = [
  ["도구", <><path d="M12.500 1v6M9.500 4h6" strokeWidth="1.500" /><text x="0" y="16" {...toolText}>TOOL</text></>],
  ["모두 지우기", eraser],
  ["반전", <><path d="M4 4a6 6 0 1 1-1 7M0 6h6l-3-4z" /><path d="M8 3a5.500 5.500 0 0 1 0 11z" fill="#777" /></>],
  ["펜", <><path d="M1 4h7" /><path d="M6 5l2 2" strokeWidth="1.500" /><path d="M8 7l6 6" strokeWidth="3.500" /></>],
  ["직선", <path d="M2 14L14 3" />],
  ["십자선", <><path d="M0 5.500h9M4.500 1v9" /><path d="M8 8l6 6" strokeWidth="3.500" /></>],
  ["봉 추세", <path d="M1 13L5 6l2 5 4-7 1 4 3-6M3.500 6v9M6.500 4v9M10.500 3v9M13.500 1v8" />],
  ["추세", <><path d="M1 13L7 6l3 3 5-4" strokeWidth="1.500" /><path d="M1 11l14-5" /></>],
  ["도형", <><path d="M1.500 2.500h5v5h-5zM1 14.500h7l-3.500-4z" /><circle cx="12" cy="5" r="3" /></>],
  ["패턴", <path d="M2 2.500h12M14 3L2 13M2 13.500h12M2 7.500h11" />],
  ["팬", <path d="M1 13.500h14M2 13L14 2M2 13l12-6M2 13L9 2" />],
  ["피치포크", <path d="M8 1v14M8 5c-5 2-7 5-7 9M8 5c5 2 7 5 7 9M8 6c-3 2-4 5-4 8M8 6c3 2 4 5 4 8" />],
  ["되돌림", <><path d="M1 2.500h4v5H1M2 5h3" strokeWidth="1.500" /><path d="M8 3h7M8 7h7M1 11.500h14" strokeDasharray="2 1" /></>],
  ["채널", <path d="M1 11L7 5l2 3 6-6M1 15l6-6 3 3 5-6M4 4l11-3" />],
  ["파동", <path d="M2 15V6l4 5 4-4 4 5V4M2 15l4-3 4 3 4-3M4 1v5M2 3l2-2 2 2M11 1v5M9 4l2 2 2-2" />],
  ["증감", <path d="M1 4.500h6M4 1.500v6M1 12h6M12 1.500v6" strokeWidth="2" />],
  ["분할", <><path d="M1 1h6v6H1zM9 1h6v6H9zM1 9h6v6H1zM9 9h6v6H9z" fill="#222" /><path d="M3 2.500h2v3H3zM11 2.500l.5 3 .5-2 .5 2 .5-3M3 13v-2h2v2M11 13v-2h2v2" stroke="white" /></>],
  ["분석", <><path d="M1 5l4-4 3 3 5-3M1 8h6M1 11h6M1 14h9M1 3v12" /><circle cx="11" cy="9" r="3.500" /><path d="M13 12l2 2" strokeWidth="2" /></>],
  ["전체 삭제", eraser],
  ["크기", <><path d="M2.500 2.500h11v11h-11z" strokeWidth="3" fill="white" /><path d="M5 11l6-6M8 5h3v3M5 8v3h3" /></>],
  ["문서", <><path d="M3 1h7l4 4v10H3z" fill="#222" /><path d="M5 6h6M5 9h6M5 12h6" stroke="white" /></>],
  ["지그재그", <path d="M0 11l4-4 3 3 4-4 2 3 3-4" />],
  ["원", <circle cx="8" cy="8" r="6" fill="#7d7d7d" />],
  ["사각형", <path d="M2 2h12v12H2z" fill="#7d7d7d" />],
  ["연결선", <><path d="M2 13L6 7l4 6V3h5" strokeWidth="1.500" /><path d="M1 12h3v3H1zM5 6h3v3H5zM9 12h3v3H9z" fill="#222" stroke="none" /></>],
  ["되돌리기", <path d="M3 8a5.500 5.500 0 1 1 6 6M0 8h6l-3 3.500z" />],
]

function SideTools() {
  return (
    <aside className="flex w-[30px] shrink-0 flex-col items-center gap-0.5 bg-[#b5c8fa] pt-2">
      <span className="mb-[3px] h-px w-5 bg-[#5a78b4]" />
      {tools.map(([name, icon]) => (
        <button key={name} aria-label={name} className="flex size-5 items-center justify-center border border-[#96aad7] bg-[#c3d2fa]">
          <svg className="size-4 overflow-visible" viewBox="0 0 16 16" fill="none" stroke="#222">{icon}</svg>
        </button>
      ))}
    </aside>
  )
}

function Radio({ name, label, on, bare }: { name: string; label: string; on?: boolean; bare?: boolean }) {
  return (
    <label className="flex shrink-0 items-center gap-0.5">
      <input
        type="radio"
        name={name}
        aria-label={label}
        defaultChecked={on}
        className="size-3 appearance-none rounded-full border border-[#28344f] bg-white checked:bg-[#28344f] checked:shadow-[inset_0_0_0_2px_#fff]"
      />
      {!bare && label}
    </label>
  )
}

function Mark({ kind }: { kind: string }) {
  return (
    <svg className="mx-auto h-3 w-3" viewBox="0 0 12 12" fill={kind === "down" ? "#0000dc" : "#d20f1e"}>
      <path d={kind === "limit" ? "M6 0l6 6H8v6H4V6H0z" : kind === "up" ? "M6 2l5 9H1z" : "M1 1h10L6 10z"} />
    </svg>
  )
}

function InvestorPanel() {
  const tabs: [string, string][] = [
    ["투자자당일추정", "w-[115px]"], ["외국인추이", "w-[83px]"], ["투자자매매상위", "w-[115px]"], ["투자자동시매수", "w-[114px]"], ["투자자연속매수", "w-[114px]"],
  ]
  const tone = (v: string, c: number) => {
    if (c === 0 || c === 4) return "text-black"
    if (v.startsWith("-")) return "text-[#0a0aaa]"
    return v === "0" ? "text-black" : "text-[#be1428]"
  }
  return (
    <section className="flex w-[712px] shrink-0 border-r border-[#78829b] pt-[3px]">
      <div className="flex w-[692px] flex-col gap-[3px] overflow-hidden bg-[#f8fafe]">
        <div className="flex h-[18px] shrink-0 bg-[#54698d] text-white">
          <button className="w-[113px] bg-linear-to-b from-white to-[#dfe8f8] text-[#28344f]">주식투자자일자</button>
          {tabs.map(([t, w]) => (
            <button key={t} className={`${w} border-r border-[#3c5078]`}>{t}</button>
          ))}
          <div className="ml-auto flex gap-px">
            <button aria-label="이전 탭" className="flex w-4 items-center justify-center bg-[#e6ecf5]"><Tri d={LEFT} className="size-2.5" /></button>
            <button aria-label="다음 탭" className="flex w-4 items-center justify-center bg-[#e6ecf5]"><Tri d={RIGHT} className="size-2.5" /></button>
          </div>
        </div>
        <div className="flex shrink-0 items-center">
          <CodeField />
          <button aria-label="색상" className={`${btn} mr-px w-[19px]`}><span className="h-4 w-3 bg-linear-to-r from-[#500000] via-[#e60000] to-[#960000]" /></button>
          <StockName />
          <div className="ml-0.5 flex h-5 w-[392px] items-center justify-between border border-[#8c96b4] px-1.5">
            <Radio name="who" label="전체" on />
            <Radio name="who" label="개인" />
            <Radio name="who" label="외국인" bare />
            <Pick label="외국인" value="외국인" dim className="w-20" />
            <Radio name="who" label="기관" />
            <Radio name="who" label="금융투자" bare />
            <Pick label="금융투자" value="금융투자" dim className="w-[75px]" />
            <Radio name="who" label="프로그램" />
          </div>
          <button className={`${btn} ml-auto w-[36px]`}>안내</button>
        </div>
        <div className="flex shrink-0 items-center">
          <input aria-label="시작일" defaultValue="2020/01/16" className={`${field} w-[68px] pl-0.5`} />
          <button aria-label="시작일 달력" className={`${btn} w-[18px]`}><CalendarDays className="size-3.5" strokeWidth={2.5} /></button>
          <span className="w-[11px] text-center">-</span>
          <input aria-label="종료일" defaultValue="2021/01/19" className={`${field} w-[71px] pl-1`} />
          <button aria-label="종료일 달력" className={`${btn} mr-0.5 w-[17px]`}><CalendarDays className="size-3.5" strokeWidth={2.5} /></button>
          <Pick label="기간" value="250일" className="w-[57px]" />
          <span className="pr-1.5 pl-4">전체 선택 시</span>
          <div className="mr-0.5 flex h-5 w-[153px] items-center gap-3 border border-[#8c96b4] pl-1.5">
            <Radio name="net" label="순매수" />
            <Radio name="net" label="순매수누적" on />
          </div>
          <div className="flex h-5 w-[157px] items-center gap-0.5 border border-[#8c96b4] pl-1.5">
            <Radio name="unit" label="수량(주)" on />
            <Radio name="unit" label="금액(백만원)" />
          </div>
          <input type="checkbox" aria-label="옵션" className="-mr-1 ml-auto size-3 appearance-none border border-[#28344f] bg-white" />
        </div>
        <table className="w-full table-fixed border-collapse bg-white">
          <thead>
            <tr className="h-[18px] bg-[#d5dff2]">
              {columns.map(([t, w]) => (
                <th key={t} className={`${w} overflow-hidden border border-l-0 border-[#a0aac8] p-0 text-center font-normal`}>{t}</th>
              ))}
            </tr>
          </thead>
          <tbody>
            {rows.map((r) => (
              <tr key={r[0]} className="h-[18px]">
                {r.map((v, c) => (
                  <td key={c} className={`overflow-hidden border-r border-[#a0aac8] p-0 text-right ${c === 0 ? "pr-0.5" : c > 3 && c < 13 ? "pr-[3px]" : ""} ${tone(v, c)}`}>
                    {c === 2 ? <Mark kind={v} /> : v}
                  </td>
                ))}
              </tr>
            ))}
          </tbody>
        </table>
      </div>
      <div className="w-[18px] bg-[#bcc8e1]">
        <button aria-label="위로" className="flex h-[17px] w-full items-center justify-center border border-t-0 border-l-0 border-[#28344f] bg-[#bcc8e1]"><Tri d="M0 7h9L4.500 2z" className="size-2.5" /></button>
      </div>
    </section>
  )
}

function InvestorChart() {
  const lines: [string, number, string][] = [
    ["#828282", 1, "17,358 50,355 90,358 110,340 135,340 145,310 150,315 154,292 160,345 175,372 190,362 205,360 220,400 235,448 245,450 255,510 260,497 265,510 280,470 300,450 320,430 330,408 350,415 375,408 400,410 430,392 455,412 480,393 500,403 540,380 565,388 580,412 590,400 640,415 680,412 700,400 770,412 800,400 830,400 850,392 880,372 920,372 940,365 960,378 975,388 1005,373 1050,370 1065,340 1075,350 1080,335 1090,352 1110,345 1140,335 1165,350 1200,360 1215,335 1225,350 1245,348 1250,260 1257,245 1268,165 1275,190 1285,200 1310,240 1335,215 1350,225 1365,242 1385,235 1395,235 1398,105"],
    ["#0a0abe", 2, "17,317 60,317 65,288 100,287 120,265 135,273 150,250 155,228 160,240 170,233 185,238 195,265 210,262 230,275 235,300 250,312 262,348 272,335 290,328 300,342 323,370 328,350 350,382 360,415 375,435 385,440 395,460 420,480 435,482 460,475 478,488 485,472 510,455 516,440 524,462 570,455 590,460 620,450 640,432 680,405 750,392 790,380 805,370 836,368 840,378 845,318 850,315 862,332 895,332 905,348 920,335 930,362 945,365 960,345 975,325 992,318 1005,372 1025,378 1035,355 1050,355 1058,372 1100,378 1112,430 1120,418 1130,420 1165,468 1195,487 1208,480 1212,460 1216,510 1225,495 1245,503 1250,390 1257,400 1262,320 1268,345 1275,250 1290,228 1297,250 1310,245 1328,255 1335,230 1352,210 1360,235 1370,320 1380,380 1392,380 1400,353"],
    ["#824646", 2, "17,317 60,317 65,342 250,340 260,343 350,338 500,343 520,348 570,348 600,339 830,339 850,348 920,352 925,335 935,322 955,322 970,330 1100,330 1115,325 1180,325 1195,315 1240,315 1252,328 1275,330 1300,342 1320,357 1360,365 1395,367 1400,355"],
    ["#c81e28", 2, "17,317 60,317 110,318 118,322 130,320 138,335 150,340 155,355 160,345 175,352 188,345 195,325 215,320 228,315 235,280 245,275 252,278 262,243 272,255 285,272 290,275 300,258 323,235 328,258 345,225 350,222 360,182 370,172 380,170 388,150 400,140 415,125 430,114 445,122 470,120 478,108 485,125 508,135 516,150 524,125 535,132 570,132 580,142 590,135 620,150 640,168 660,175 690,192 720,193 780,208 810,217 836,217 843,268 852,270 860,248 880,243 900,243 905,222 912,235 925,235 945,237 960,258 985,278 992,278 1006,220 1025,218 1035,245 1050,245 1060,230 1100,222 1112,172 1120,190 1130,190 1165,135 1190,125 1205,135 1210,158 1216,108 1225,125 1245,105 1255,210 1262,260 1268,260 1272,320 1290,350 1300,320 1315,300 1320,310 1328,290 1335,320 1345,315 1352,335 1362,290 1370,200 1385,158 1393,165 1400,200"],
  ]
  return (
    <section className="flex min-w-0 flex-1 flex-col">
      <div className="mt-[3px] mb-[5px] h-1 shrink-0 border-y border-[#7896d2] bg-[#dce6fa]" />
      <div className="mb-1.5 flex min-h-0 flex-1">
        <div className="relative min-w-0 flex-1 border border-[#8ca0be] bg-white">
          <svg className="absolute inset-0 h-full w-full" viewBox="17 48 1415 465" preserveAspectRatio="none">
            <path d="M17 115H1432M17 187H1432M17 257H1432M17 328H1432M17 398H1432M17 470H1432M305 48V513M645 48V513M1000 48V513M1338 48V513" stroke="#d2d2d2" strokeDasharray="1 4" vectorEffect="non-scaling-stroke" />
            {lines.map(([color, width, points]) => (
              <polyline key={color} points={points} fill="none" stroke={color} strokeWidth={width} vectorEffect="non-scaling-stroke" />
            ))}
          </svg>
          <Legend items={[["주가", "#828282"], ["개인", "#0a0abe"], ["기관", "#824646"], ["외국인", "#c81e28"]]} className="top-0.5 left-1.5" />
        </div>
        <div className="relative w-[57px] shrink-0">
          <Ticks height={155} from={20} step={6.2} />
          <div className="flex h-full flex-col items-end justify-between pt-[25px] pb-1">
            {["300,000", "200,000", "100,000", "0", "-100,000", "-200,000", "-300,000"].map((t) => (
              <span key={t}>{t}</span>
            ))}
          </div>
        </div>
      </div>
    </section>
  )
}
